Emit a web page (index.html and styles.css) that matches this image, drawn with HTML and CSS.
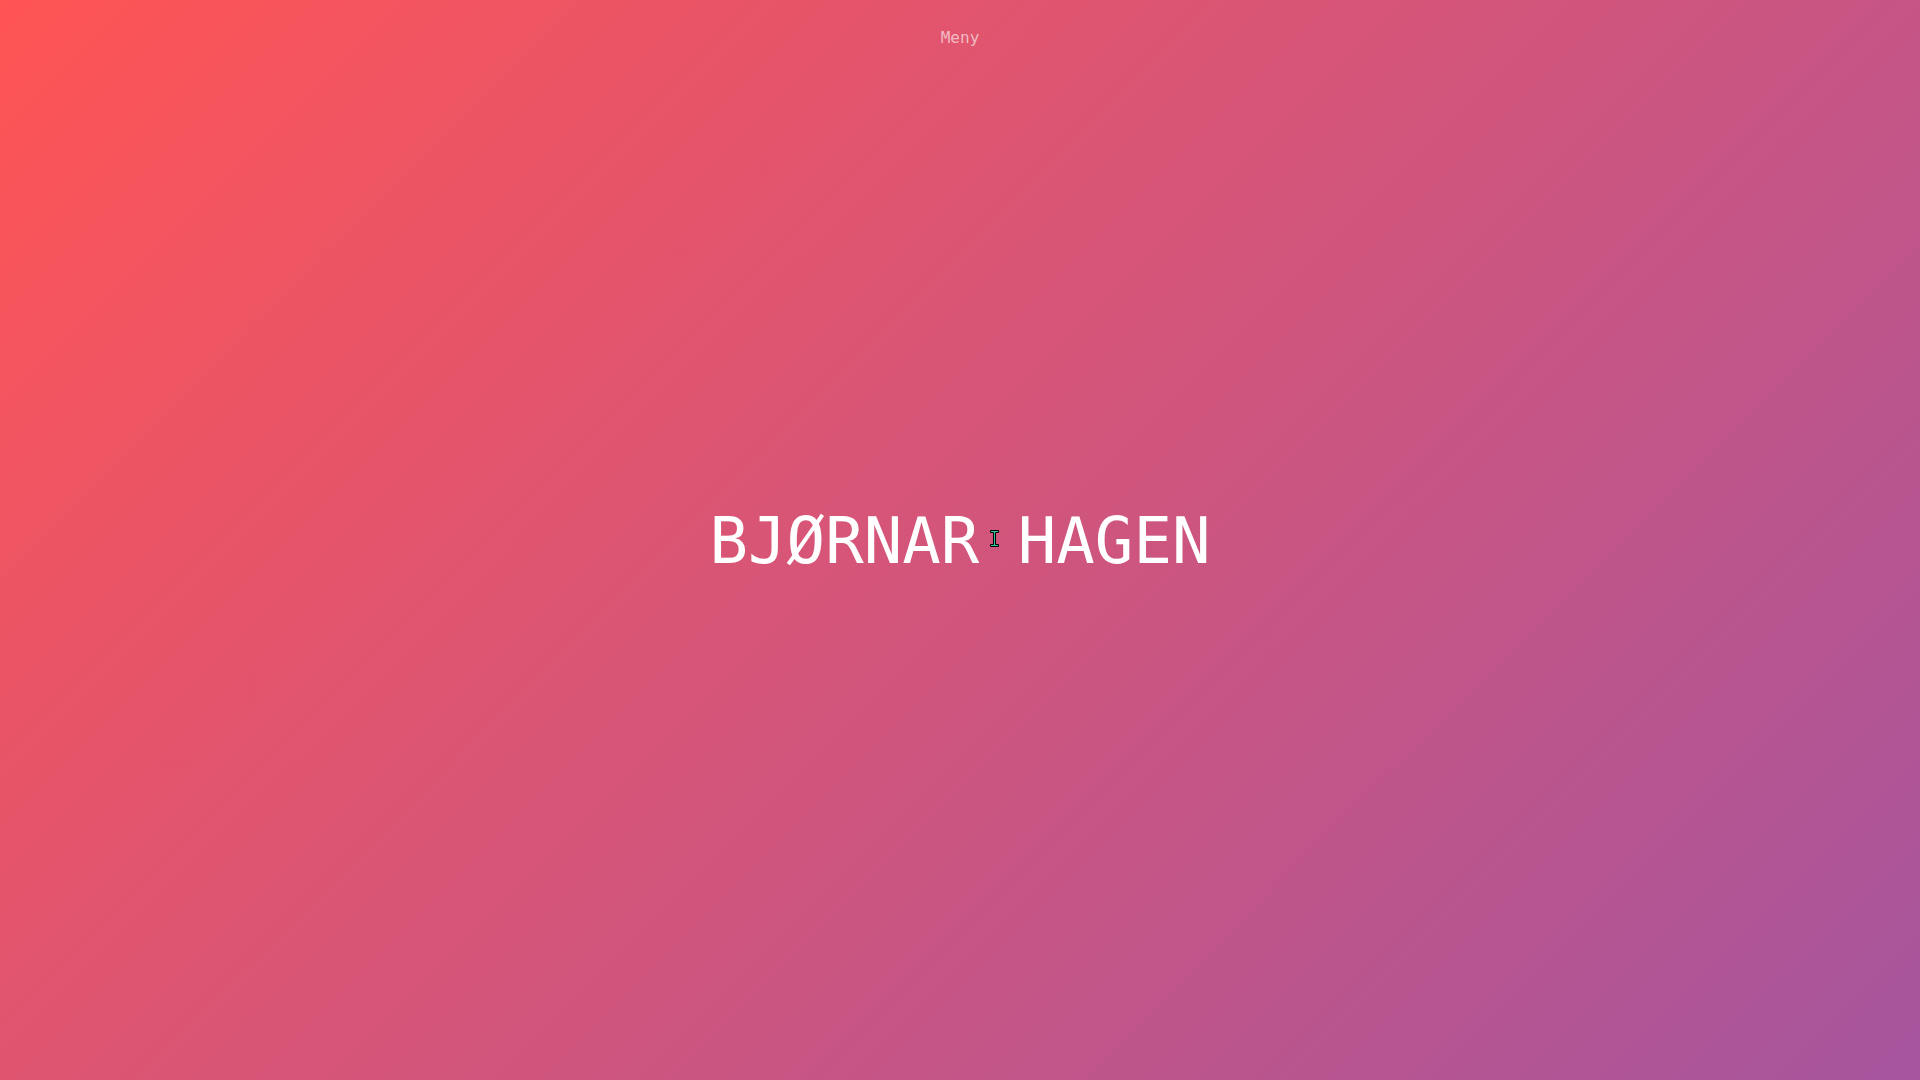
FILE: index.html
```html
<!DOCTYPE html>
<html lang="no">
<head>
<meta charset="utf-8">
<title>Bjørnar Hagen</title>
<link rel="stylesheet" href="styles.css">
</head>
<body>
<div class="page">
  <header class="top">
    <a class="menu" href="#">Meny</a>
  </header>
  <main class="hero">
    <h1 class="name">BJØRNAR HAGEN</h1>
  </main>
  <svg class="cursor" width="9" height="17" viewBox="0 0 9 17" aria-hidden="true">
    <path d="M0.5 0.5h8v2h-3v12h3v2h-8v-2h3v-12h-3z" fill="#2ec7a0" stroke="#000" stroke-width="1"/>
  </svg>
</div>
</body>
</html>
```
FILE: styles.css
```css
html, body {
  margin: 0;
  padding: 0;
  height: 100%;
}
body {
  font-family: "DejaVu Sans Mono", monospace;
  background: linear-gradient(135deg, #ff5454 0%, #d75577 45%, #a6559e 100%);
  overflow: hidden;
}
.page {
  position: relative;
  height: 100vh;
  display: flex;
  flex-direction: column;
}
.top {
  display: flex;
  justify-content: center;
  padding-top: 28px;
}
.menu {
  font-size: 16px;
  line-height: 19px;
  color: rgba(255, 255, 255, 0.6);
  text-decoration: none;
}
.hero {
  flex: 1;
  display: flex;
  align-items: center;
  justify-content: center;
  margin-top: -46px;
}
.name {
  margin: 0;
  font-weight: normal;
  font-size: 64px;
  color: #fff;
}
.cursor {
  position: absolute;
  left: 990px;
  top: 530px;
}
```
